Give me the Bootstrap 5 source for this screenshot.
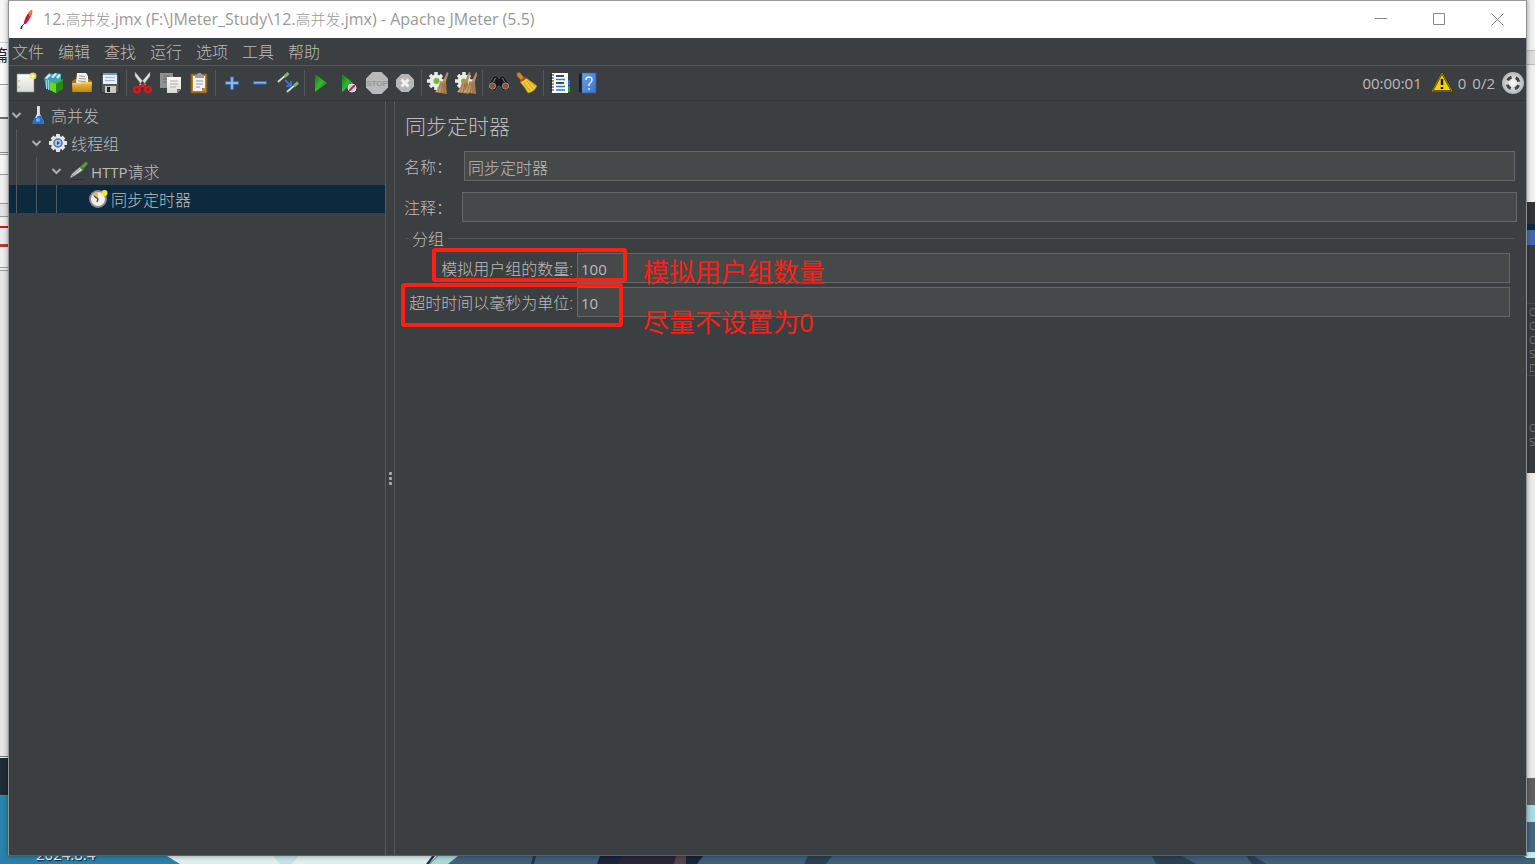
<!DOCTYPE html>
<html lang="zh-CN">
<head>
<meta charset="utf-8">
<meta name="viewport" content="width=device-width, initial-scale=1">
<title>12.高并发.jmx - Apache JMeter (5.5)</title>
<link href="https://cdn.jsdelivr.net/npm/bootstrap@5.3.0/dist/css/bootstrap.min.css" rel="stylesheet">
<style>
  :root { --pane:#3c3f41; --line:#515658; --ink:#bbbbbb; --field:#45494a; --field-line:#646869; --mark-red:#ff1f13; }
  body { font-family:"Open Sans","Noto Sans CJK SC",sans-serif; font-size:16px; line-height:24px; color:var(--ink); background:#3f6079; font-weight:300; }
  .latin { font-size:15px; font-weight:400; }
  .desk-side { width:8px; flex:none; overflow:hidden; }
  .desk-left { font-size:16px; line-height:16px; padding-top:47px; direction:rtl; background:linear-gradient(#f7f7f7 42px,#d0d0d0 42px 43px,#fafafa 43px 84px,#9a9a9a 84px 85px,#f4f4f4 85px 117px,#6c6c6c 117px 119px,#e9e9e9 119px 152px,#8a8a8a 152px 153px,#eee 153px 154px,#999 154px 155px,#f5f5f5 155px 174px,#999 174px 175px,#f0f0f0 175px 203px,#999 203px 204px,#e4e4e4 204px 216px,#999 216px 217px,#eee 217px 226px,#e80d12 226px 228px,#e9e9f2 228px 244px,#c03538 244px 247px,#eee 247px 267px,#999 267px 268px,#eee 268px 270px,#999 270px 271px,#e6e6e6 271px 756px,#777 756px 757px,#eee 757px 758px,#1c2b34 758px 795px,#1697c5 795px 796px,#2a84ab 796px); }
  .desk-right { font-size:11px; line-height:14px; padding:305px 0 0 2px; color:#8d9194; background:linear-gradient(#f1f1f1 50px,#bbb 50px 51px,#dcdcdc 51px 64px,#bbb 64px 65px,#f0f0f0 65px 202px,#333638 202px 224px,#10293d 224px 230px,#4468ae 230px 245px,#383b3d 245px 303px,#4b4e50 303px 304px,#383b3d 304px 375px,#4b4e50 375px 376px,#383b3d 376px 473px,#ececec 473px 778px,#616161 778px 805px,#a9dae2 805px 822px,#47657e 822px 852px,#c6eef0 852px); }
  .desk-right div + div { margin-top:46px; }
  .desk-bottom { height:8px; overflow:hidden; }
  .desk-bottom svg { width:100%; height:8px; display:block; }
  .desk-date { left:36px; bottom:2px; font-size:15px; line-height:16px; font-weight:400; color:#f4f8fa; text-shadow:1px 1px 1px #123; }
  .app { border:1px solid #8f9293; border-top-color:#999; border-bottom-color:#5d6163; background:var(--pane); box-shadow:0 0 5px rgba(0,0,0,.4); min-width:0; z-index:1; }
  .title-bar { background:#fff; color:#999; height:37px; padding-left:8px; }
  .title-bar h1 { font-size:16px; line-height:24px; font-weight:400; margin:0 0 2px 6px; }
  .title-bar h1 span { font-size:15px; font-weight:300; }
  .win-btn { width:58px; height:36px; border:0; background:none; color:#888; padding:0; display:flex; align-items:center; justify-content:center; }
  .menu-strip { height:28px; padding:0 4px 0 3px; gap:14px; border-bottom:1px solid var(--line); }
  .menu-strip a { color:var(--ink); text-decoration:none; line-height:28px; }
  .tool-strip { height:35px; padding-left:3px; border-bottom:1px solid #323537; }
  .tool-btn { width:28px; height:28px; border:0; padding:0; background:none; display:flex; align-items:center; justify-content:center; }
  .tool-btn svg, .node-icon { width:22px; height:22px; display:block; }
  .tool-gap { width:1px; height:26px; margin:0 2px; background:#55595b; }
  .status-area { gap:2px; padding-right:1px; }
  .tree-pane { width:377px; flex:none; border-right:1px solid #555a5c; }
  .split-bar { width:9px; flex:none; border-right:1px solid #555a5c; gap:2px; }
  .split-bar i { width:3px; height:3px; background:#adadad; border-radius:1px; }
  .tree-row { height:28px; padding-left:7px; }
  .tree-row.active-row { background:#0d293e; }
  .node-text { padding-top:2px; }
  .rail { width:20px; height:28px; border-left:1px solid #54595b; flex:none; }
  .twist { width:11px; height:11px; margin-left:-5px; margin-right:6px; flex:none; }
  .node-icon { width:20px; height:20px; margin-right:3px; flex:none; }
  .editor { padding:10px 11px 10px 9px; min-width:0; }
  .editor h2 { font-size:21px; line-height:30px; font-weight:300; margin:0 0 10px 1px; }
  .field { height:30px; min-width:0; background:var(--field); border:1px solid var(--field-line); border-radius:0; color:var(--ink); padding:1px 3px 0; font-weight:300; }
  .field.latin { font-weight:400; }
  .name-label { width:60px; flex:none; padding-top:2px; }
  .note-row { margin:11px -2px 4px 0; }
  .note-row .name-label { width:58px; }
  .group-box { border-top:1px solid var(--line); padding:0 5px 0 0; margin-left:2px; }
  .group-box legend { float:none; width:auto; font-size:16px; line-height:24px; padding:1px 4px 0 3px; margin:0 0 2px 3px; }
  .opt-row + .opt-row { margin-top:4px; }
  .opt-label { width:171px; padding:2px 4px 0 0; flex:none; text-align:right; white-space:nowrap; }
  .red-frame { border:4px solid var(--mark-red); border-radius:3px; pointer-events:none; }
  .frame-a { left:26px; top:-5px; width:195px; height:34px; }
  .frame-b { left:-5px; top:-4px; width:222px; height:44px; }
  .red-note { color:var(--mark-red); font-size:26px; line-height:30px; font-weight:400; left:237px; white-space:nowrap; pointer-events:none; }
  .note-a { top:4px; } .note-b { top:20px; }
</style>
</head>
<body>
<svg width="0" height="0" class="position-absolute" aria-hidden="true"><defs>
  <linearGradient id="gGreen" x2="1" y2="1"><stop stop-color="#0b7d12"/><stop offset=".5" stop-color="#35b52f"/><stop offset="1" stop-color="#077a0a"/></linearGradient>
  <linearGradient id="gGold" x2="0" y2="1"><stop stop-color="#f0be4a"/><stop offset="1" stop-color="#c38410"/></linearGradient>
  <linearGradient id="gPaper" x2="0" y2="1"><stop stop-color="#fbfbfb"/><stop offset="1" stop-color="#d9d9d7"/></linearGradient>
  <linearGradient id="gBlue" x2="1" y2="1"><stop stop-color="#6aa2ea"/><stop offset="1" stop-color="#3b74c9"/></linearGradient>
  <linearGradient id="gBroom" x2="1"><stop stop-color="#d6b384"/><stop offset="1" stop-color="#9c7446"/></linearGradient>
  <radialGradient id="gBall"><stop stop-color="#fff"/><stop offset="1" stop-color="#b4b4b4"/></radialGradient>
  <g id="gear"><circle cx="9" cy="9" r="6.5" fill="#ececea"/><path d="M9 0v18M0 9h18M3 3l12 12M3 15L15 3" stroke="#ececea" stroke-width="3.5"/></g>
  <g id="whisk"><path d="M20 0l1.500 1-3 10-3-1z" fill="#b98d5c"/><path d="M13 9l6 1 1 12-12-2q4-4 5-11z" fill="url(#gBroom)"/><path d="M14 11l-3 9m5-9l-2 10m3-9l0 9" stroke="#8a6337" stroke-width=".6"/></g>
</defs></svg>

<div class="min-vh-100 d-flex flex-column">
  <div class="d-flex flex-grow-1">
    <div class="desk-side desk-left text-dark" aria-hidden="true"><b>篇</b></div>

    <div class="app flex-grow-1 d-flex flex-column">
      <header class="title-bar d-flex align-items-center">
        <svg width="20" height="22" viewBox="0 0 20 22" aria-hidden="true"><path d="M7 15Q7 8 14 1l1 0q1 3-2 8-2 4-4 6z" fill="#cf2140"/><path d="M11 5q2-4 4-4 1 3-2 7z" fill="#ee7c2b"/><path d="M12 5L7 15l-2 2" stroke="#8f2350" fill="none"/><path d="M5 17l-1 3" stroke="#222" stroke-width="1.500"/></svg>
        <h1>12.<span>高并发</span>.jmx (F:\JMeter_Study\12.<span>高并发</span>.jmx) - Apache JMeter (5.5)</h1>
        <div class="ms-auto d-flex">
          <button class="win-btn" aria-label="最小化"><svg width="13" height="13" stroke="currentColor"><path d="M0 5.500h12"/></svg></button>
          <button class="win-btn" aria-label="最大化"><svg width="13" height="13" stroke="currentColor" fill="none"><path d="M.5.500h11v11H.5z"/></svg></button>
          <button class="win-btn" aria-label="关闭"><svg width="13" height="13" stroke="currentColor"><path d="M.5.500l12 12M12.500.500l-12 12"/></svg></button>
        </div>
      </header>

      <nav class="menu-strip d-flex">
        <a href="#">文件</a><a href="#">编辑</a><a href="#">查找</a><a href="#">运行</a><a href="#">选项</a><a href="#">工具</a><a href="#">帮助</a>
      </nav>

      <div class="tool-strip d-flex align-items-center" role="toolbar">
        <button class="tool-btn" aria-label="新建"><svg viewBox="0 0 22 22"><path d="M2 2h17v18H2z" fill="url(#gPaper)" stroke="#8b8b87" stroke-width=".6"/><circle cx="18" cy="4" r="3.500" fill="#f4e665" opacity=".85"/><circle cx="18" cy="4" r="1.500" fill="#fffbd0"/><path d="M4 8v2m0 4v2" stroke="#aaa"/></svg></button>
        <button class="tool-btn" aria-label="模板"><svg viewBox="0 0 22 22"><path d="M1 6l5-5 4 1 4-1 4 1v14l-9 3-6-3z" fill="#3d9fc0"/><path d="M2 6l4-4 2 1-4 4zM8 5l4-4 2 1-4 4zM13 5l3-3 2 1-3 4z" fill="#d7eef3"/><path d="M3.500 8v9M5.500 8v10" stroke="#8fd3e4"/><path d="M7 10l4-1 4 1 5-3v9l-7 5-6-3z" fill="#43b718"/><path d="M7 10l6 2v9l-6-3z" fill="#6bd42f"/><path d="M13 12l7-4v9l-7 4z" fill="#228c0e"/></svg></button>
        <button class="tool-btn" aria-label="打开"><svg viewBox="0 0 22 22"><path d="M1 9l3-2h14l3 2v11H1z" fill="#a96f08"/><path d="M5 11L6 1l9 0 2 3v8z" fill="#f3f3f1"/><path d="M8 4l6 .5M8 6.500l7 .5M7 9l8 .5" stroke="#999"/><path d="M1 11h8l2-1h10l-1 10H2z" fill="url(#gGold)"/><path d="M2 12h7l2-1h9" stroke="#ffd97c" fill="none"/></svg></button>
        <button class="tool-btn" aria-label="保存"><svg viewBox="0 0 22 22"><path d="M2 2h18v19H3l-1-1z" fill="#555759" stroke="#262728"/><path d="M4 1h14v11H4z" fill="#e8f0f7"/><path d="M4 1h14v2H4z" fill="#6d9dcc"/><path d="M6 5.500h10M6 8.500h10" stroke="#9eb5c8"/><path d="M6 14h11v7H6z" fill="#c8c9c8"/><path d="M8 15h3v5H8z" fill="#222"/></svg></button>
        <span class="tool-gap"></span>
        <button class="tool-btn" aria-label="剪切"><svg viewBox="0 0 22 22"><path d="M3 0l11 13-3 2L3 4zM18 0L7 13l3 2 8-11z" fill="#dfdfdd" stroke="#858585" stroke-width=".5"/><g fill="none" stroke="#d61818" stroke-width="2.500"><circle cx="5" cy="17.500" r="2.800"/><circle cx="16" cy="17.500" r="2.800"/><path d="M7 15l4-2 4 2"/></g></svg></button>
        <button class="tool-btn" aria-label="复制"><svg viewBox="0 0 22 22"><path d="M0 1h13v15H0z" fill="#8f9191"/><path d="M3 4h7M3 7h4M3 10h4" stroke="#686a6a"/><path d="M7 5h14v12l-4 4H7z" fill="url(#gPaper)"/><path d="M10 9h8M10 12h8M10 15h6" stroke="#afafad"/><path d="M21 17h-4v4z" fill="#777"/></svg></button>
        <button class="tool-btn" aria-label="粘贴"><svg viewBox="0 0 22 22"><path d="M3 2h16v19H3z" fill="#b88022" stroke="#785012"/><path d="M5 4h12v12l-3 3H5z" fill="#f4f4f2"/><path d="M8 9h7M8 12h7M8 15h4" stroke="#999"/><path d="M7 3h2l1-2h3l1 2h2v3H7z" fill="#9b9b99"/><path d="M17 16h-3v3z" fill="#888"/></svg></button>
        <span class="tool-gap"></span>
        <button class="tool-btn" aria-label="展开"><svg viewBox="0 0 22 22"><path d="M9.500 5h3v4.500h5v3h-5v5h-3v-5h-5v-3h5z" fill="#86b6f1" stroke="#356fc0"/></svg></button>
        <button class="tool-btn" aria-label="折叠"><svg viewBox="0 0 22 22"><path d="M4.500 9.500h13v2.500h-13z" fill="#86b6f1" stroke="#356fc0"/></svg></button>
        <button class="tool-btn" aria-label="切换"><svg viewBox="0 0 22 22"><path d="M1 10l7-6M10 20l7-6" stroke="#dcdcdc" stroke-width="2.200"/><path d="M1 11.500l7-6M10 21.500l7-6" stroke="#555"/><path d="M7.500 4.500l4-3.500M17 14l4-3.500" stroke="#7bb661" stroke-width="3"/><path d="M8 8l5 5m1-4v5h-5" stroke="#367fe6" stroke-width="1.600" fill="none"/></svg></button>
        <span class="tool-gap"></span>
        <button class="tool-btn" aria-label="启动"><svg viewBox="0 0 22 22"><path d="M5 2l12 9L5 20z" fill="url(#gGreen)"/></svg></button>
        <button class="tool-btn" aria-label="不停顿开始"><svg viewBox="0 0 22 22"><path d="M4 2l11 9L4 20z" fill="url(#gGreen)"/><circle cx="14" cy="16" r="4" fill="#b4d4f6" stroke="#e9edf2"/><path d="M11 19l6-6" stroke="#d02727" stroke-width="2"/></svg></button>
        <button class="tool-btn" aria-label="停止"><svg viewBox="0 0 22 22"><path d="M6.500 0h9L22 6.500v9L15.500 22h-9L0 15.500v-9z" fill="#b9b9b9"/><text x="11" y="14" text-anchor="middle" font-size="8" font-weight="700" fill="#979797" font-family="Liberation Sans Narrow, Liberation Sans, sans-serif">STOP</text></svg></button>
        <button class="tool-btn" aria-label="关闭线程"><svg viewBox="0 0 22 22"><path d="M7.500 2h7L20 7.500v7L14.500 20h-7L2 14.500v-7z" fill="#b7b7b7"/><path d="M7.500 7.500l7 7m0-7l-7 7" stroke="#f1f1f1" stroke-width="3"/></svg></button>
        <span class="tool-gap"></span>
        <button class="tool-btn" aria-label="清除"><svg viewBox="0 0 22 22"><use href="#gear"/><circle cx="9.500" cy="9" r="3" fill="#6fbf28"/><use href="#whisk"/></svg></button>
        <button class="tool-btn" aria-label="清除全部"><svg viewBox="0 0 22 22"><use href="#gear"/><circle cx="8.500" cy="9" r="2.500" fill="#7cae49"/><use href="#whisk" x="-6"/><use href="#whisk" x="1"/></svg></button>
        <span class="tool-gap"></span>
        <button class="tool-btn" aria-label="查找"><svg viewBox="0 0 22 22"><path d="M6 4h3l2 3 2-3h3l6 9-1 5-6 1-3-5h-2l-3 5-6-1-1-5z" fill="#171819" stroke="#54585b" stroke-width=".7"/><circle cx="4.500" cy="14" r="3.200" fill="#8c5433" stroke="#999" stroke-width=".8"/><circle cx="17.500" cy="14" r="3.200" fill="#8c5433" stroke="#999" stroke-width=".8"/><path d="M7.500 6l-2 4M14.500 6l2 4" stroke="#888"/></svg></button>
        <button class="tool-btn" aria-label="重置查找"><svg viewBox="0 0 22 22"><path d="M1 1q3-2 5 2l3 4-3 3-3-4q-3-2-2-5z" fill="#c78735" stroke="#805017" stroke-width=".6"/><path d="M4 10l6-4q6 4 11 8-3 6-9 7-3-6-8-11z" fill="#f0cb35" stroke="#a78110" stroke-width=".6"/><path d="M4 9.500l6-4" stroke="#bd3e18" stroke-width="2"/><path d="M8 11l6 8m-3-10l6 8m-5-9l7 6" stroke="#cfa520"/></svg></button>
        <span class="tool-gap"></span>
        <button class="tool-btn" aria-label="函数助手"><svg viewBox="0 0 22 22"><path d="M3 1h16v20H3z" fill="#fff"/><path d="M19 8h2v5h-2z" fill="#1977d1"/><path d="M19 14h2v6h-2z" fill="#22a52d"/><path d="M7 4h8M7 11h8" stroke="#111" stroke-width="1.500"/><path d="M7 7.500h9M7 14.500h9M7 18h9" stroke="#2577ec" stroke-width="1.500"/><path d="M1 3h4M1 6h4M1 9h4M1 12h4M1 15h4M1 18h4" stroke="#222"/></svg></button>
        <button class="tool-btn" aria-label="帮助"><svg viewBox="0 0 22 22"><path d="M2 2l3-1v20l-3-1z" fill="#181d25"/><path d="M5 1h14v20H5z" fill="url(#gBlue)" stroke="#315f9f" stroke-width=".7"/><path d="M9 8q0-3 3-3t3 3q0 2-3 4v2m0 2v2" fill="none" stroke="#e8f0fb" stroke-width="1.500"/></svg></button>

        <div class="status-area ms-auto d-flex align-items-center latin">
          <span>00:00:01</span>
          <button class="tool-btn ms-1" aria-label="日志警告"><svg viewBox="0 0 22 22"><path d="M11 1l10 18H1z" fill="#f4cf0a" stroke="#3c3205" stroke-width="2" stroke-linejoin="round"/><path d="M11 1l10 18H1z" fill="none" stroke="#c9ad19" stroke-width=".7"/><path d="M11 7v6m0 2v2" stroke="#151515" stroke-width="2.500"/></svg></button>
          <span>0</span><span class="ms-1">0/2</span>
          <svg class="ms-1" width="24" height="24" viewBox="0 0 24 24" aria-hidden="true"><circle cx="12" cy="12" r="11" fill="url(#gBall)"/><circle cx="12" cy="12" r="6" fill="none" stroke="#444" stroke-width="3" stroke-dasharray="5 4.420" stroke-dashoffset="-2.200"/></svg>
        </div>
      </div>

      <main class="d-flex flex-grow-1">
        <aside class="tree-pane">
          <div class="tree-row d-flex align-items-center">
            <svg class="twist" viewBox="0 0 11 11"><path d="M1.500 3l4 4 4-4" fill="none" stroke="#adadad" stroke-width="2"/></svg>
            <svg class="node-icon" viewBox="0 0 20 20"><path d="M9 1h3v8l4 8q0 2-2 2H6q-2 0-1-2l4-8z" fill="#c8cfd6"/><path d="M8 11h5l3 6q0 2-2 2H6q-2 0-1-2z" fill="#2272d4"/><path d="M10 2v7l-2 4" stroke="#fff" fill="none"/><circle cx="10" cy="15" r="2" fill="#65a9f4"/></svg><span class="node-text">高并发</span>
          </div>
          <div class="tree-row d-flex align-items-center">
            <span class="rail"></span>
            <svg class="twist" viewBox="0 0 11 11"><path d="M1.500 3l4 4 4-4" fill="none" stroke="#adadad" stroke-width="2"/></svg>
            <svg class="node-icon" viewBox="0 0 20 20"><path d="M10 1v18M1 10h18M4 4l12 12M4 16L16 4" stroke="#dfe2e6" stroke-width="4"/><circle cx="10" cy="10" r="7" fill="#e3e6ea"/><circle cx="10" cy="10" r="4" fill="#a9c4e8" stroke="#54709d" stroke-width="1.500"/><path d="M9 8l3 2-3 2z" fill="#244f8f"/></svg><span class="node-text">线程组</span>
          </div>
          <div class="tree-row d-flex align-items-center">
            <span class="rail"></span><span class="rail"></span>
            <svg class="twist" viewBox="0 0 11 11"><path d="M1.500 3l4 4 4-4" fill="none" stroke="#adadad" stroke-width="2"/></svg>
            <svg class="node-icon" viewBox="0 0 20 20"><path d="M3 18.500h13" stroke="#2e3133"/><path d="M2 17l2-4 8-7 3 3-9 6z" fill="#dcdedf" stroke="#777" stroke-width=".6"/><path d="M4 15l8-7" stroke="#8b9092"/><path d="M12 6l3 3M13 6l4-4q2-1 2 1l-4 4z" fill="#67b443" stroke="#4c9134" stroke-width="1.500"/></svg><span class="node-text"><span class="latin">HTTP</span>请求</span>
          </div>
          <div class="tree-row active-row d-flex align-items-center">
            <span class="rail"></span><span class="rail"></span><span class="rail"></span><span class="twist"></span>
            <svg class="node-icon" viewBox="0 0 20 20"><circle cx="10" cy="10" r="8" fill="#f1eee5" stroke="#8d8994" stroke-width="2"/><path d="M10 10L4 6a7 7 0 0 1 6-3z" fill="#d7bd72"/><path d="M6 7l4 3-1 3" stroke="#444" stroke-width="1.300" fill="none"/><circle cx="16.500" cy="4" r="3" fill="#f3e92c"/></svg><span class="node-text">同步定时器</span>
          </div>
        </aside>
        <div class="split-bar d-flex flex-column align-items-center justify-content-center"><i></i><i></i><i></i></div>

        <section class="editor flex-grow-1">
          <h2>同步定时器</h2>
          <div class="d-flex align-items-center"><label class="name-label" for="nm">名称：</label><input id="nm" class="field flex-grow-1" type="text" value="同步定时器"></div>
          <div class="note-row d-flex align-items-center"><label class="name-label" for="cm">注释：</label><input id="cm" class="field flex-grow-1" type="text"></div>
          <fieldset class="group-box">
            <legend>分组</legend>
            <div class="opt-row d-flex align-items-center position-relative">
              <label class="opt-label" for="users">模拟用户组的数量:</label><input id="users" class="field latin flex-grow-1" type="text" value="100">
              <span class="red-frame frame-a position-absolute"></span><span class="red-note note-a position-absolute">模拟用户组数量</span>
            </div>
            <div class="opt-row d-flex align-items-center position-relative">
              <label class="opt-label" for="wait">超时时间以毫秒为单位:</label><input id="wait" class="field latin flex-grow-1" type="text" value="10">
              <span class="red-frame frame-b position-absolute"></span><span class="red-note note-b position-absolute">尽量不设置为0</span>
            </div>
          </fieldset>
        </section>
      </main>
    </div>

    <div class="desk-side desk-right" aria-hidden="true"><div>C<br>C<br>C<br>SI<br>D</div><div>C<br>SI</div></div>
  </div>
  <div class="desk-bottom position-relative">
    <svg viewBox="0 0 1535 8" preserveAspectRatio="none" aria-hidden="true"><path fill="#3f6079" d="M0 0h1535v8H0z"/><path fill="#2a80aa" d="M0 0h170l14 8H0z"/><path fill="#e1eeee" d="M167 0h270l-8 8H180z"/><path fill="#c5e3e4" d="M273 0h25l-6 8h-12z"/><path fill="#a8d9db" d="M438 0h20l-10 8h-18z"/><path fill="#20384b" d="M432 0h3l-6 8h-3zM533 0h3l-2 8h-3z"/><path fill="#19243d" d="M600 0h103l-6 8H597z"/><path fill="#292638" d="M622 0h60l-3 8h-61z"/><path fill="#514650" d="M676 0h10v8h-12z"/><path fill="#294257" d="M808 0h24l-6 8h-22zM1152 0h30l14 8h-40zM1246 0h8l12 8h-14z"/><path fill="#c6eef0" d="M1524 0h11v2h-8z"/></svg>
    <span class="desk-date position-absolute">2024.8.4</span>
  </div>
</div>
<script src="https://cdn.jsdelivr.net/npm/bootstrap@5.3.0/dist/js/bootstrap.bundle.min.js"></script>
</body>
</html>
